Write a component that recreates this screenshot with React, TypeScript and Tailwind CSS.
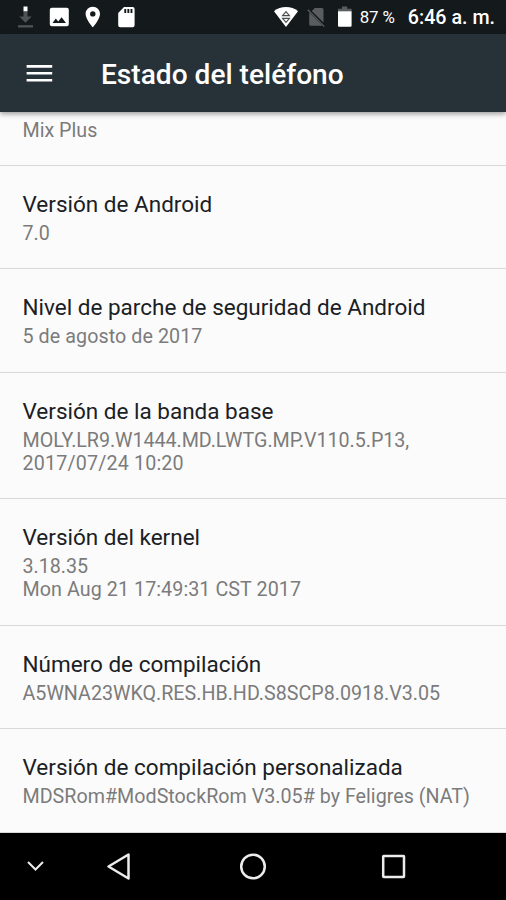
// src/App.tsx
import { clsx } from "clsx";

interface StatusLine {
  text: string;
  tracking?: string;
}

interface StatusItem {
  title: string;
  lines: StatusLine[];
  height: string;
}

const STATUS_ITEMS: StatusItem[] = [
  { title: "Versión de Android", lines: [{ text: "7.0" }], height: "h-[103px]" },
  {
    title: "Nivel de parche de seguridad de Android",
    lines: [{ text: "5 de agosto de 2017", tracking: "tracking-[0.08px]" }],
    height: "h-[104px]",
  },
  {
    title: "Versión de la banda base",
    lines: [
      { text: "MOLY.LR9.W1444.MD.LWTG.MP.V110.5.P13,", tracking: "tracking-[-0.04px]" },
      { text: "2017/07/24 10:20", tracking: "tracking-[0.17px]" },
    ],
    height: "h-[126px]",
  },
  {
    title: "Versión del kernel",
    lines: [
      { text: "3.18.35" },
      { text: "Mon Aug 21 17:49:31 CST 2017", tracking: "tracking-[0.08px]" },
    ],
    height: "h-[127px]",
  },
  {
    title: "Número de compilación",
    lines: [{ text: "A5WNA23WKQ.RES.HB.HD.S8SCP8.0918.V3.05" }],
    height: "h-[103px]",
  },
  {
    title: "Versión de compilación personalizada",
    lines: [{ text: "MDSRom#ModStockRom V3.05# by Feligres (NAT)", tracking: "tracking-[0.02px]" }],
    height: "h-[104px]",
  },
];

function StatusBar() {
  return (
    <div className="flex h-[34px] shrink-0 items-center bg-[#14191c] text-white">
      <svg width="150" height="34" viewBox="0 0 150 34" className="shrink-0">
        {/* download */}
        <path d="M23.5 6.5h4v5h-4z" fill="#fff" />
        <path d="M23.5 11.5h4v5h4.2l-6.2 6.2-6.2-6.2h4.2z" fill="#505355" />
        <path d="M18 25.2h15v2.3H18z" fill="#505355" />
        {/* picture */}
        <path
          fillRule="evenodd"
          fill="#fff"
          d="M51.8 7.8h15a2 2 0 0 1 2 2v14.4a2 2 0 0 1-2 2h-15a2 2 0 0 1-2-2V9.8a2 2 0 0 1 2-2zM52.5 23H66l-4.4-5.8-3.4 4.2-2.4-2.8z"
        />
        {/* place */}
        <path
          fillRule="evenodd"
          fill="#fff"
          d="M92.8 6.8c-4 0-7.2 3.2-7.2 7.1 0 5.3 7.2 13.3 7.2 13.3s7.2-8 7.2-13.3c0-3.9-3.2-7.1-7.2-7.1zm0 9.8a2.7 2.7 0 1 1 0-5.4 2.7 2.7 0 0 1 0 5.4z"
        />
        {/* sd card */}
        <path
          fillRule="evenodd"
          fill="#fff"
          d="M124 7h8.6a2 2 0 0 1 2 2v16.2a2 2 0 0 1-2 2h-12.400a2 2 0 0 1-2-2V13zM124.3 9v4h1.9V9zm3.1 0v4h1.9V9zm3.1 0v4h1.9V9z"
        />
      </svg>
      <div className="flex-1" />
      <svg width="85" height="34" viewBox="0 0 85 34" className="shrink-0">
        {/* wifi */}
        <path d="M1 11.2C4.2 8.400 8.500 7 13 7s8.800 1.400 12 4.200L13 27z" fill="#fff" />
        <path
          d="M9.6 15.6 13 11.6l3.4 4zM9.6 18.4 13 22.4l3.400-4z"
          fill="none"
          stroke="#4b4f52"
          strokeWidth="1.2"
        />
        {/* no sim */}
        <path
          d="M41.8 8h7.200a1.500 1.500 0 0 1 1.500 1.500V22.600L38.800 10.900zM36.200 12.500l13.300 13.300H37.700a1.500 1.500 0 0 1-1.500-1.500z"
          fill="#5a5d5f"
        />
        <path d="M34.8 9.7 51.3 26.6" stroke="#5a5d5f" strokeWidth="1.3" />
        {/* battery */}
        <path d="M69 6.5h5.2v2.200h4.400v2.800H65V8.700h4z" fill="#5a5d5f" />
        <path d="M65 11.200h13.600v14.600a1 1 0 0 1-1 1H66a1 1 0 0 1-1-1z" fill="#fff" />
      </svg>
      <span className="ml-[2px] w-[48px] text-[16.9px] leading-none tracking-[-0.2px] whitespace-pre">
        87 %
      </span>
      <span className="mt-[2px] mr-[11px] text-[19.68px] leading-none font-medium whitespace-nowrap">
        6:46 a. m.
      </span>
    </div>
  );
}

function Toolbar() {
  return (
    <header className="z-10 flex h-[78px] shrink-0 items-center bg-[#273238] pl-[26px] text-white shadow-[0_2px_5px_rgba(0,0,0,0.38)]">
      <button aria-label="Menú" className="mt-[2px] flex w-[75px]">
        <svg width="27" height="20" viewBox="0 0 27 20">
          <path d="M.6 1h25.600v2.700H.6zM.6 7.900h25.600v2.700H.6zM.6 14.900h25.600v2.700H.6z" fill="#fff" />
        </svg>
      </button>
      <h1 className="mt-[4px] text-[28.1px] leading-none font-medium whitespace-nowrap">
        Estado del teléfono
      </h1>
    </header>
  );
}

function StatusRow({ title, lines, height }: StatusItem) {
  return (
    <li className={clsx("shrink-0 border-b border-[#d9d9d9] pt-[25px] pl-[22.5px]", height)}>
      <h2 className="mb-[4px] text-[22.5px] leading-[27px] whitespace-nowrap text-[#1a2024]">
        {title}
      </h2>
      {lines.map((line) => (
        <p
          key={line.text}
          className={clsx(
            "text-[19.68px] leading-[23.4px] whitespace-nowrap text-[#7b7b7b]",
            line.tracking
          )}
        >
          {line.text}
        </p>
      ))}
    </li>
  );
}

function NavigationBar() {
  return (
    <nav className="h-[67px] shrink-0 bg-black">
      <svg width="506" height="67" viewBox="0 0 506 67" fill="none" stroke="#ececec">
        <path d="m28 29 7.5 7.5 7.5-7.5" strokeWidth="2" />
        <path d="M128.5 21.5v24l-20-12z" strokeWidth="2.5" strokeLinejoin="round" />
        <circle cx="253" cy="33.5" r="11.8" strokeWidth="2.5" />
        <rect x="383.2" y="23" width="20.8" height="21" strokeWidth="2.5" rx=".5" />
      </svg>
    </nav>
  );
}

export default function App() {
  return (
    <div className="flex h-[900px] w-[506px] flex-col overflow-hidden bg-[#fbfbfb] font-[Roboto,sans-serif]">
      <StatusBar />
      <Toolbar />
      <ul className="flex h-[721px] shrink-0 flex-col overflow-hidden">
        <li className="h-[54px] shrink-0 border-b border-[#d9d9d9] pt-[7px] pl-[22.5px]">
          <p className="text-[19.68px] leading-[23.4px] text-[#7b7b7b]">Mix Plus</p>
        </li>
        {STATUS_ITEMS.map((item) => (
          <StatusRow key={item.title} {...item} />
        ))}
      </ul>
      <NavigationBar />
    </div>
  );
}
